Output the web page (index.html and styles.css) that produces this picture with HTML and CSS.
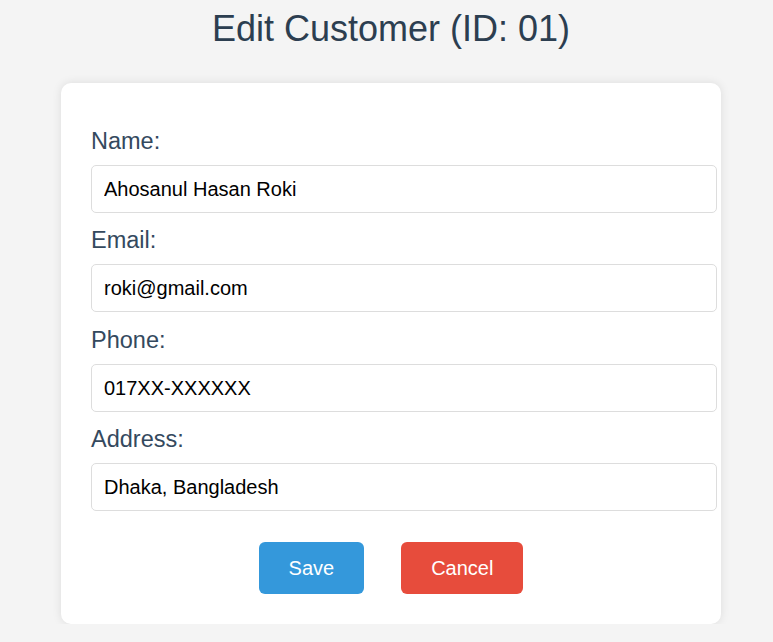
FILE: index.html
```html
<!DOCTYPE html>
<html lang="en">
<head>
<meta charset="utf-8">
<title>Edit Customer</title>
<link rel="stylesheet" href="styles.css">
</head>
<body>
<h1 class="title">Edit Customer (ID: 01)</h1>
<form class="card">
  <div class="field">
    <label class="label" for="name">Name:</label>
    <input class="input" id="name" type="text" value="Ahosanul Hasan Roki">
  </div>
  <div class="field">
    <label class="label" for="email">Email:</label>
    <input class="input" id="email" type="text" value="roki@gmail.com">
  </div>
  <div class="field">
    <label class="label" for="phone">Phone:</label>
    <input class="input" id="phone" type="text" value="017XX-XXXXXX">
  </div>
  <div class="field">
    <label class="label" for="address">Address:</label>
    <input class="input" id="address" type="text" value="Dhaka, Bangladesh">
  </div>
  <div class="actions">
    <button class="btn btn-save" type="button">Save</button>
    <button class="btn btn-cancel" type="button">Cancel</button>
  </div>
</form>
</body>
</html>
```

FILE: styles.css
```css
html, body {
  margin: 0;
  background: #f4f4f4;
}
body {
  padding: 0 0 0 9px;
  font-family: "Liberation Sans", Arial, sans-serif;
}
.title {
  margin: 8px 0 34px;
  font-size: 36px;
  line-height: 41px;
  font-weight: normal;
  text-align: center;
  color: #2c3e50;
}
.card {
  width: 600px;
  margin: 0 auto;
  padding: 30px;
  background: #fff;
  border-radius: 10px;
  box-shadow: 0 0 10px rgba(0, 0, 0, 0.1);
}
.field {
  display: flex;
  flex-direction: column;
  align-items: flex-start;
}
.label {
  margin: 14.5px 0 10px;
  font-size: 23.5px;
  line-height: 27px;
  color: #34495e;
}
.input {
  width: 600px;
  margin: 0;
  padding: 12px;
  border: 1px solid #ddd;
  border-radius: 5px;
  font-family: "Liberation Sans", Arial, sans-serif;
  font-size: 20px;
  line-height: 22px;
  height: 22px;
  color: #000;
  background: #fff;
}
.actions {
  display: flex;
  justify-content: center;
  gap: 37px;
  margin-top: 31px;
}
.btn {
  padding: 14px 30px;
  border: none;
  border-radius: 6px;
  font-family: "Liberation Sans", Arial, sans-serif;
  font-size: 20px;
  line-height: 24px;
  color: #fff;
  cursor: pointer;
}
.btn-save {
  background: #3498db;
}
.btn-cancel {
  background: #e74c3c;
}
```
